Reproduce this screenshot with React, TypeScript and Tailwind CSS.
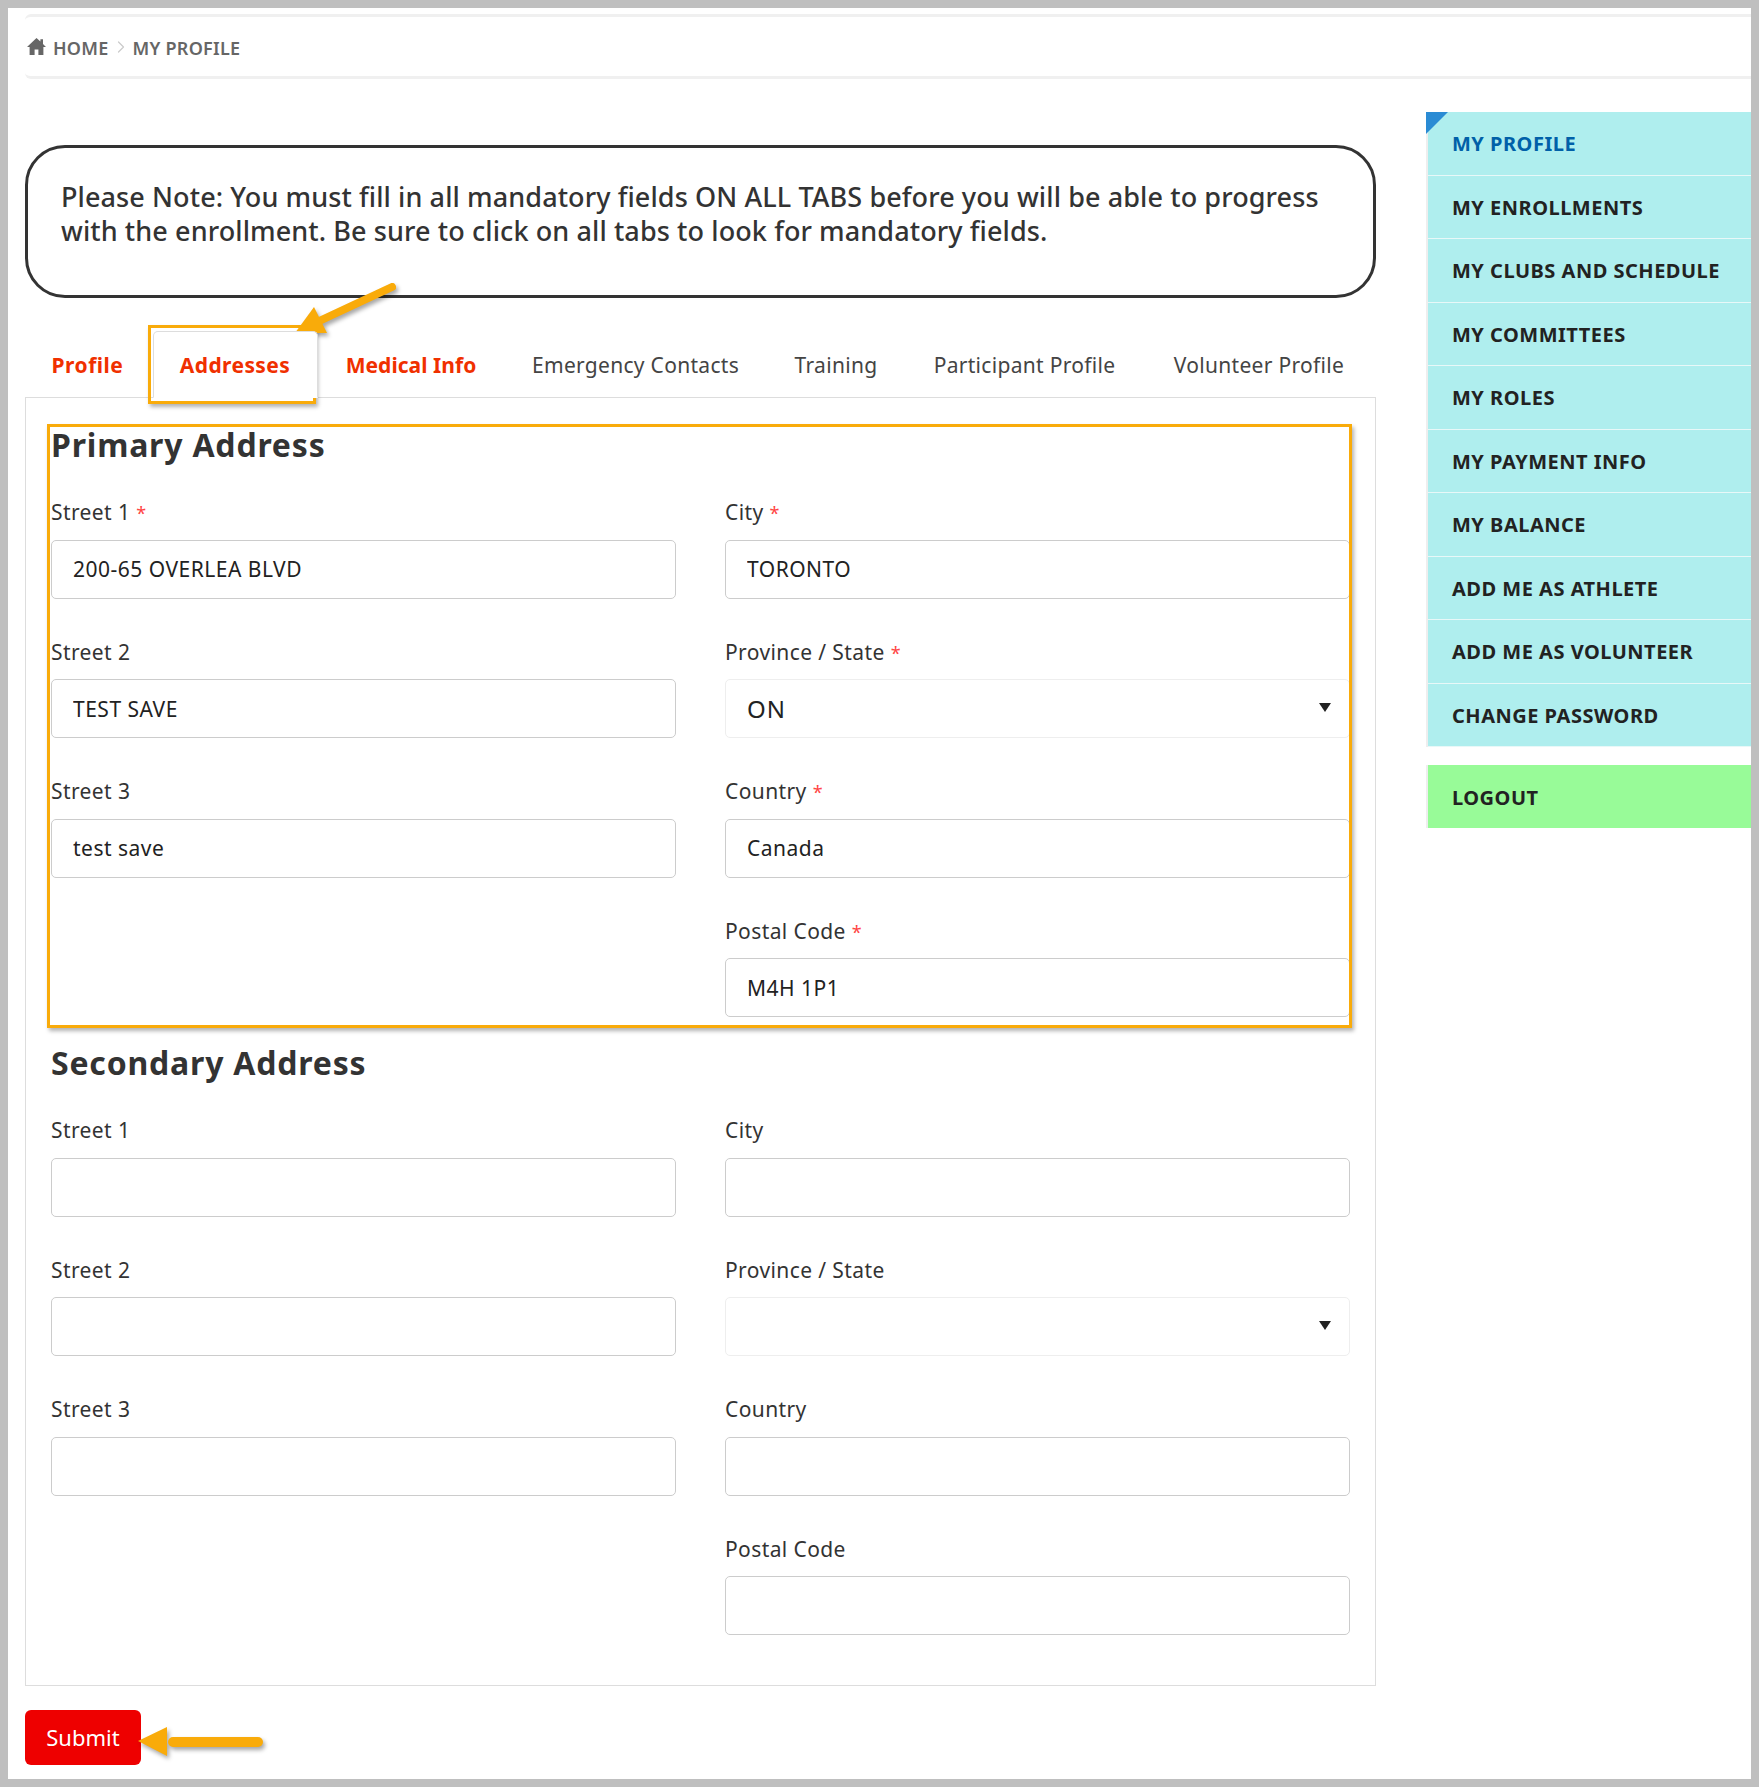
import React from 'react';
import { ChevronRight } from 'lucide-react';

const font = { fontFamily: '"Noto Sans", sans-serif' };

const sideLinks = [
  'MY PROFILE',
  'MY ENROLLMENTS',
  'MY CLUBS AND SCHEDULE',
  'MY COMMITTEES',
  'MY ROLES',
  'MY PAYMENT INFO',
  'MY BALANCE',
  'ADD ME AS ATHLETE',
  'ADD ME AS VOLUNTEER',
  'CHANGE PASSWORD',
];

const tabs = [
  { label: 'Profile', red: true, w: 'w-[128px] pr-[3px] tracking-[0.5px]' },
  { label: 'Addresses', red: true, active: true, w: 'w-[165px] pr-[1px] tracking-[0.4px]' },
  { label: 'Medical Info', red: true, w: 'w-[186px] tracking-[0.05px]' },
  { label: 'Emergency Contacts', w: 'w-[263px] tracking-[0.3px]' },
  { label: 'Training', w: 'w-[138px] tracking-[0.3px]' },
  { label: 'Participant Profile', w: 'w-[239px] tracking-[0.3px]' },
  { label: 'Volunteer Profile', w: 'w-[232px] pr-[2px] tracking-[0.3px]' },
];

function Field({ label, value, required, select }: { label: string; value?: string; required?: boolean; select?: boolean }) {
  return (
    <div className="mb-[40px]">
      <div className="h-[28px] leading-[26px] mb-[12.5px] text-[21px] tracking-[0.4px] text-[#333]">
        {label}
        {required && <span className="text-[#f44] ml-[6px] text-[18px]">*</span>}
      </div>
      {select ? (
        <div className="relative h-[59px] border border-[#eee] rounded-[5px] px-[21px] flex items-center text-[24px] tracking-[1px] text-[#222]">
          {value}
          <svg className="absolute right-[18px] top-[23px]" width="12" height="9" viewBox="0 0 12 9">
            <path d="M0 0h12L6 9z" fill="#222" />
          </svg>
        </div>
      ) : (
        <input
          readOnly
          value={value ?? ''}
          className="block w-full h-[59px] border border-[#ccc] rounded-[5px] px-[21px] text-[21px] tracking-[0.5px] text-[#222] outline-none"
          style={font}
        />
      )}
    </div>
  );
}

function AddressBlock({ title, v, required }: { title: string; v: string[]; required?: boolean }) {
  return (
    <div>
      <h2 className="h-[40px] leading-[40px] text-[32px] tracking-[0.8px] font-bold text-[#333] mb-[34px]">{title}</h2>
      <div className="flex gap-[49px]">
        <div className="w-[625px]">
          <Field label="Street 1" value={v[0]} required={required} />
          <Field label="Street 2" value={v[1]} />
          <Field label="Street 3" value={v[2]} />
        </div>
        <div className="w-[625px]">
          <Field label="City" value={v[3]} required={required} />
          <Field label="Province / State" value={v[4]} required={required} select />
          <Field label="Country" value={v[5]} required={required} />
          <Field label="Postal Code" value={v[6]} required={required} />
        </div>
      </div>
    </div>
  );
}

export default function App() {
  return (
    <div className="relative h-[1787px] w-[1759px] border-[8px] border-[#bfbfbf] bg-white overflow-hidden" style={font}>
      {/* breadcrumb */}
      <div className="ml-[17px] mt-[6px] h-[65px] pt-[3px] border-y-[3px] border-[#f0f0f0] rounded-l-[6px] flex items-center text-[18px] tracking-[0.25px] font-semibold text-[#666]">
        <svg className="ml-[2px] mr-[7px] -mt-[3px]" width="19" height="17" viewBox="0 0 19 17">
          <path d="M9.5 0 0 9h2.6v8h5v-5.5h3.8V17h5V9H19l-3-2.9V1.2h-2.6v2.4z" fill="#666" />
        </svg>
        <span>HOME</span>
        <ChevronRight className="mx-[2px] text-[#ccc] -mt-[2px]" size={20} strokeWidth={1.5} />
        <span>MY PROFILE</span>
      </div>

      <div className="flex items-start ml-[17px]">
        {/* main column */}
        <div className="w-[1351px] mt-[66px]">
          <div className="h-[153px] border-[3px] border-[#333] rounded-[40px] pt-[32px] pl-[33px] pr-[20px] text-[27px] tracking-[0.1px] leading-[34px] font-medium text-[#333]">
            Please Note: You must fill in all mandatory fields ON ALL TABS before you will be able to progress with the enrollment. Be sure to click on all tabs to look for mandatory fields.
          </div>

          <div className="flex h-[99px] items-end">
            {tabs.map((t) => (
              <div
                key={t.label}
                className={`${t.w} h-[67px] pt-[2px] shrink-0 flex items-center justify-center text-[21px] relative top-[1px] ${t.red ? 'text-[#f03000] font-bold' : 'text-[#444]'} ${t.active ? 'border border-[#ddd] border-b-white bg-white rounded-t-[5px] z-10' : ''}`}
              >
                {t.label}
              </div>
            ))}
          </div>

          <div className="h-[1289px] border border-[#ddd] px-[25px] pt-[27px]">
            <AddressBlock title="Primary Address" required v={['200-65 OVERLEA BLVD', 'TEST SAVE', 'test save', 'TORONTO', 'ON', 'Canada', 'M4H 1P1']} />
            <div className="-mt-[14px]">
              <AddressBlock title="Secondary Address" v={['', '', '', '', '', '', '']} />
            </div>
          </div>

          <button className="mt-[24px] h-[55px] w-[116px] rounded-[6px] bg-[#ee0000] text-white text-[22px]" style={font}>
            Submit
          </button>
        </div>

        {/* sidebar */}
        <div className="ml-[50px] w-[325px] mt-[33px] text-[20px] tracking-[0.5px] font-bold text-[#222]">
          <div className="relative border-l-[2px] border-[#eee]">
            <div className="absolute -left-[2px] top-0 w-0 h-0 border-t-[22px] border-r-[22px] border-t-[#2a8bd4] border-r-transparent" />
            {sideLinks.map((l, i) => (
              <div
                key={l}
                className={`h-[63.5px] pt-[2px] bg-[#afeeee] border-b-[1px] border-[#e8f8f8] pl-[24px] flex items-center ${i === 0 ? 'text-[#0060a8]' : ''}`}
              >
                {l}
              </div>
            ))}
          </div>
          <div className="mt-[18px] h-[63px] pt-[2px] bg-[#98fb98] border-l-[2px] border-[#eee] pl-[24px] flex items-center">LOGOUT</div>
        </div>
      </div>

      {/* annotations */}
      <div className="absolute left-[39px] top-[416px] w-[1305px] h-[604px] border-[3px] border-[#f9ab0a] shadow-[2px_3px_4px_rgba(0,0,0,0.3)]" />
      <div className="absolute left-[140px] top-[317px] w-[168px] h-[79px] border-[3px] border-[#f9ab0a] shadow-[2px_3px_4px_rgba(0,0,0,0.3)]" />
      <svg className="absolute left-[280px] top-[270px] overflow-visible" width="120" height="70" viewBox="0 0 120 70">
        <g style={{ filter: 'drop-shadow(2px 3px 2px rgba(0,0,0,0.35))' }}>
          <path d="M104 9 27 45" stroke="#f9ab0a" strokeWidth="8" strokeLinecap="round" />
          <path d="M7 55 26 29 39 55z" fill="#f9ab0a" />
        </g>
      </svg>
      <svg className="absolute left-[125px] top-[1715px] overflow-visible" width="140" height="40" viewBox="0 0 140 40">
        <g style={{ filter: 'drop-shadow(2px 3px 2px rgba(0,0,0,0.35))' }}>
          <path d="M40 19h85" stroke="#f9ab0a" strokeWidth="10" strokeLinecap="round" />
          <path d="M5 18 34 4v29z" fill="#f9ab0a" />
        </g>
      </svg>
    </div>
  );
}
